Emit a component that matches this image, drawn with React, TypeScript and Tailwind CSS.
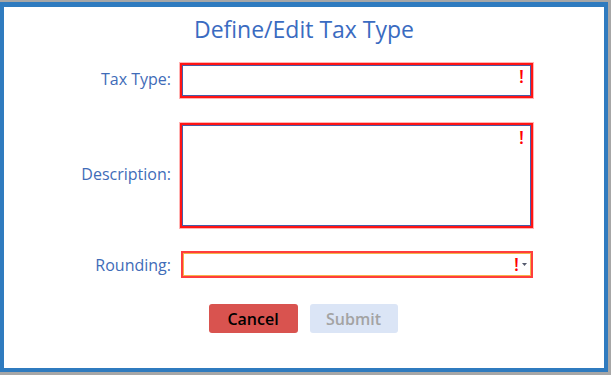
export default function App() {
  return (
    <div className="w-[611px] h-[375px] bg-[#a7a7a7] overflow-hidden font-['Open_Sans',sans-serif]">
      <div className="w-[608px] h-[370px] mt-[2px] bg-white border-x-4 border-t-[5px] border-b-4 border-[#2f7bbf]">
        <h1 className="text-center text-[23px] leading-none text-[#3a6bc1] pt-[11px]">
          Define/Edit Tax Type
        </h1>

        <div className="mt-[21px] grid grid-cols-[167px_354px] gap-x-[8px] items-center">
          {/* Tax Type */}
          <label className="text-right text-[16px] text-[#3f6cb8]">Tax Type:</label>
          <div className="h-[34px] p-[3px]">
            <div className="relative h-[31px] w-[349px] border border-[#4a5ca6] shadow-[0_0_0_2px_#ff1414,0_0_0_3px_#ffb4b4]">
              <span className="absolute right-[6px] top-[1px] text-[18px] font-semibold text-[#ff0000] leading-none">!</span>
            </div>
          </div>

          {/* Description */}
          <label className="text-right text-[16px] text-[#3f6cb8] mt-[26px]">Description:</label>
          <div className="mt-[26px] h-[104px] p-[3px]">
            <div className="relative h-[101px] w-[349px] border border-[#4a5ca6] shadow-[0_0_0_2px_#ff1414,0_0_0_3px_#ffb4b4]">
              <span className="absolute right-[6px] top-[2px] text-[18px] font-semibold text-[#ff0000] leading-none">!</span>
            </div>
          </div>

          {/* Rounding */}
          <label className="text-right text-[16px] text-[#3f6cb8] mt-[25px]">Rounding:</label>
          <div className="mt-[25px] pl-[2px]">
            <div className="relative h-[27px] w-[352px] border-2 border-[#ff3d3d] shadow-[inset_0_0_0_1px_#f4b24a]">
              <span className="absolute right-[12px] top-[2px] text-[18px] font-semibold text-[#ff0000] leading-none">!</span>
              <svg className="absolute right-[4px] top-[10px]" width="5" height="3" viewBox="0 0 5 3">
                <path d="M0 0H5L2.5 3Z" fill="#555a6e" />
              </svg>
            </div>
          </div>
        </div>

        <div className="mt-[26px] flex justify-center gap-[12px] pr-[2px]">
          <button className="w-[89px] h-[29px] rounded-[3px] bg-[#d9534f] text-black font-semibold text-[16px]">
            Cancel
          </button>
          <button className="w-[88px] h-[29px] rounded-[3px] bg-[#dbe5f6] text-[#a3a3a3] font-semibold text-[16px]">
            Submit
          </button>
        </div>
      </div>
    </div>
  );
}
